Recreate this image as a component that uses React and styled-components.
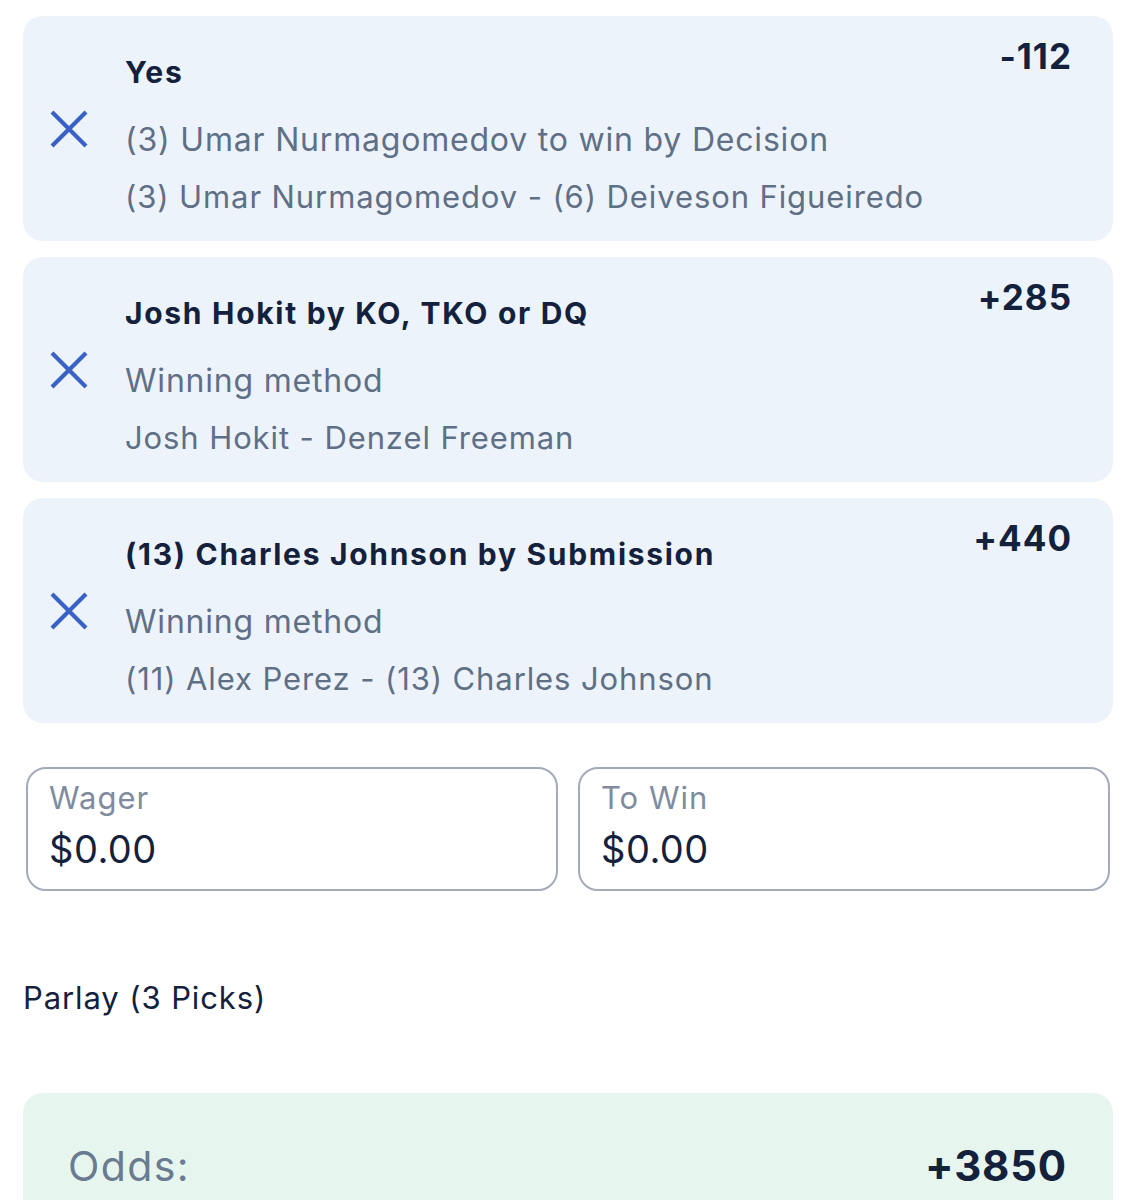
import React from "react";
import styled, { createGlobalStyle } from "styled-components";

const GlobalStyle = createGlobalStyle`
  body {
    margin: 0;
    background: #ffffff;
    font-family: Inter, "Noto Sans", sans-serif;
    color: #14213d;
  }
`;

const picks = [
  {
    title: "Yes",
    market: "(3) Umar Nurmagomedov to win by Decision",
    match: "(3) Umar Nurmagomedov - (6) Deiveson Figueiredo",
    odds: "-112",
  },
  {
    title: "Josh Hokit by KO, TKO or DQ",
    market: "Winning method",
    match: "Josh Hokit - Denzel Freeman",
    odds: "+285",
  },
  {
    title: "(13) Charles Johnson by Submission",
    market: "Winning method",
    match: "(11) Alex Perez - (13) Charles Johnson",
    odds: "+440",
  },
];

const CloseIcon = () => (
  <svg width="40" height="40" viewBox="0 0 40 40">
    <path
      d="M3 3 L37 37 M37 3 L3 37"
      stroke="#3a62c6"
      strokeWidth="4.2"
      fill="none"
    />
  </svg>
);

const App = () => {
  return (
    <>
      <GlobalStyle />
      <Page>
        <PickList>
          {picks.map((pick) => (
            <PickCard key={pick.title}>
              <IconCol>
                <RemoveButton>
                  <CloseIcon />
                </RemoveButton>
              </IconCol>
              <PickBody>
                <PickTitle>{pick.title}</PickTitle>
                <PickMarket>{pick.market}</PickMarket>
                <PickMatch>{pick.match}</PickMatch>
              </PickBody>
              <PickOdds>{pick.odds}</PickOdds>
            </PickCard>
          ))}
        </PickList>

        <InputRow>
          <AmountField>
            <FieldLabel>Wager</FieldLabel>
            <FieldValue>$0.00</FieldValue>
          </AmountField>
          <AmountField>
            <FieldLabel>To Win</FieldLabel>
            <FieldValue>$0.00</FieldValue>
          </AmountField>
        </InputRow>

        <ParlayLabel>Parlay (3 Picks)</ParlayLabel>

        <SummaryBox>
          <SummaryLabel>Odds:</SummaryLabel>
          <SummaryOdds>+3850</SummaryOdds>
        </SummaryBox>
      </Page>
    </>
  );
};

const Page = styled.div`
  padding: 16px 23px 0;
`;

const PickList = styled.div`
  display: flex;
  flex-direction: column;
  gap: 16px;
`;

const PickCard = styled.div`
  display: flex;
  height: 225px;
  box-sizing: border-box;
  background: #edf3fa;
  border-radius: 20px;
`;

const IconCol = styled.div`
  width: 102px;
  flex-shrink: 0;
  display: flex;
  align-items: center;
  padding-left: 26px;
  box-sizing: border-box;
`;

const RemoveButton = styled.button`
  border: none;
  background: none;
  padding: 0;
  cursor: pointer;

  svg {
    display: block;
  }
`;

const PickBody = styled.div`
  flex: 1;
  padding-top: 36px;
`;

const PickTitle = styled.div`
  font-size: 30px;
  line-height: 40px;
  font-weight: 700;
  letter-spacing: 1.7px;
  color: #14213d;
`;

const PickMarket = styled.div`
  margin-top: 26px;
  font-size: 32px;
  line-height: 44px;
  letter-spacing: 0.8px;
  color: #5f6f86;
`;

const PickMatch = styled.div`
  margin-top: 13px;
  font-size: 31px;
  line-height: 44px;
  letter-spacing: 0.9px;
  color: #5f6f86;
`;

const PickOdds = styled.div`
  padding: 18px 41px 0 0;
  font-size: 35px;
  line-height: 44px;
  font-weight: 700;
  letter-spacing: 1px;
  color: #14213d;
`;

const InputRow = styled.div`
  display: grid;
  grid-template-columns: 1fr 1fr;
  gap: 20px;
  margin: 44px 3px 0;
`;

const AmountField = styled.div`
  height: 124px;
  box-sizing: border-box;
  border: 2px solid #a3abb7;
  border-radius: 20px;
  padding: 9px 21px 0;
`;

const FieldLabel = styled.div`
  font-size: 31px;
  line-height: 40px;
  letter-spacing: 1px;
  color: #7f8ca0;
`;

const FieldValue = styled.div`
  margin-top: 8px;
  font-size: 38px;
  line-height: 46px;
  letter-spacing: 0.5px;
  color: #14213d;
`;

const ParlayLabel = styled.div`
  margin-top: 87px;
  font-size: 31px;
  line-height: 40px;
  letter-spacing: 0.9px;
  color: #14213d;
`;

const SummaryBox = styled.div`
  display: flex;
  justify-content: space-between;
  align-items: flex-start;
  margin-top: 75px;
  height: 160px;
  padding: 46px 46px 0 45px;
  box-sizing: border-box;
  background: #e6f6ee;
  border-radius: 20px 20px 0 0;
`;

const SummaryLabel = styled.div`
  font-size: 41px;
  line-height: 54px;
  letter-spacing: 1.4px;
  color: #6a7a90;
`;

const SummaryOdds = styled.div`
  font-size: 42px;
  line-height: 54px;
  font-weight: 700;
  letter-spacing: 0.8px;
  color: #14213d;
`;

export default App;
